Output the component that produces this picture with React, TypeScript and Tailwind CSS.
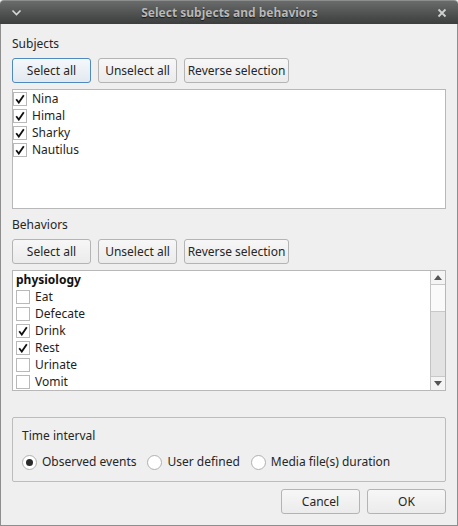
import React from 'react'

const font = { fontFamily: '"Noto Sans", "Open Sans", sans-serif' }

function Btn({ label, focused = false, w = 'w-[80px]' }: { label: string; focused?: boolean; w?: string }) {
  return (
    <button
      type="button"
      className={`${w} h-[25px] whitespace-nowrap rounded-[3px] border text-[12px] text-[#262626] bg-gradient-to-b ${
        focused ? 'border-[#4f89bd] from-[#f5f8fb] to-[#e2e9ef]' : 'border-[#b4b4b4] from-[#f7f7f7] to-[#ebebeb]'
      }`}
    >
      {label}
    </button>
  )
}

function Check({ checked }: { checked: boolean }) {
  return (
    <span className="w-[14px] h-[14px] border border-[#b9b9b9] bg-white flex items-center justify-center shrink-0">
      {checked && (
        <svg width="10" height="10" viewBox="0 0 10 10">
          <path d="M1.2 5.2 L3.8 8.6 L8.8 1.2" fill="none" stroke="#111" strokeWidth="1.8" />
        </svg>
      )}
    </span>
  )
}

function Row({ label, checked }: { label: string; checked: boolean }) {
  return (
    <div className="h-[17px] flex items-center gap-[5px] text-[12px] text-[#1e1e1e]">
      <Check checked={checked} />
      <span>{label}</span>
    </div>
  )
}

function Radio({ label, on }: { label: string; on?: boolean }) {
  return (
    <div className="flex items-center gap-[5px]">
      <span className="w-[15px] h-[15px] rounded-full border border-[#b0b0b0] bg-white flex items-center justify-center">
        {on && <span className="w-[7px] h-[7px] rounded-full bg-[#2b2b2b]" />}
      </span>
      <span>{label}</span>
    </div>
  )
}

function ButtonRow({ focusFirst = false }: { focusFirst?: boolean }) {
  return (
    <div className="flex gap-[7px]">
      <Btn label="Select all" w="w-[79px]" focused={focusFirst} />
      <Btn label="Unselect all" w="w-[79px]" />
      <Btn label="Reverse selection" w="w-[105px]" />
    </div>
  )
}

export default function App() {
  const subjects = ['Nina', 'Himal', 'Sharky', 'Nautilus']
  const behaviors: [string, boolean][] = [
    ['Eat', false],
    ['Defecate', false],
    ['Drink', true],
    ['Rest', true],
    ['Urinate', false],
    ['Vomit', false],
  ]

  return (
    <div style={font} className="w-[458px] h-[526px] bg-[#efefef] flex flex-col text-[12px] text-[#262626]">
      {/* title bar */}
      <div className="h-[24px] shrink-0 rounded-t-[4px] bg-gradient-to-b from-[#6a6c6c] to-[#3c3e3e] border-t border-[#8c8e8e] flex items-center px-[10px]">
        <svg width="11" height="8" viewBox="0 0 11 8" className="ml-[1px]">
          <path d="M1.5 1.5 L5.5 5.5 L9.5 1.5" fill="none" stroke="#d8d8d8" strokeWidth="1.6" />
        </svg>
        <span
          className="flex-1 text-center font-bold text-[12px] text-[#b8b8b8]"
          style={{ textShadow: '0 1px 1px #1a1a1a' }}
        >
          Select subjects and behaviors
        </span>
        <svg width="10" height="10" viewBox="0 0 10 10" className="mr-[1px]">
          <path d="M1.5 1.5 L8.5 8.5 M8.5 1.5 L1.5 8.5" stroke="#cfcfcf" strokeWidth="1.8" />
        </svg>
      </div>

      {/* body */}
      <div className="flex-1 flex flex-col border-x border-b border-[#8e8e8e] px-[11px]">
        <div className="h-[17px] mt-[11px] leading-[17px]">Subjects</div>
        <div className="mt-[6px]">
          <ButtonRow focusFirst />
        </div>
        <div className="mt-[6px] h-[120px] border border-[#b8b8b8] bg-white">
          {subjects.map((s) => (
            <Row key={s} label={s} checked />
          ))}
        </div>

        <div className="h-[17px] mt-[7px] leading-[17px]">Behaviors</div>
        <div className="mt-[6px]">
          <ButtonRow />
        </div>
        <div className="mt-[6px] h-[121px] border border-[#b8b8b8] bg-white flex">
          <div className="flex-1 pl-[3px] overflow-hidden">
            <div className="h-[17px] leading-[17px] font-bold text-[#111]">physiology</div>
            {behaviors.map(([b, c]) => (
              <Row key={b} label={b} checked={c} />
            ))}
          </div>
          <div className="w-[15px] border-l border-[#c4c4c4] flex flex-col bg-[#f4f4f4]">
            <div className="h-[14px] flex items-center justify-center border-b border-[#c8c8c8]">
              <svg width="8" height="5" viewBox="0 0 8 5">
                <path d="M0 5 L4 0 L8 5 Z" fill="#555" />
              </svg>
            </div>
            <div className="h-[27px] bg-[#fafafa] border-b border-[#c8c8c8]" />
            <div className="flex-1 bg-[#e3e3e3]" />
            <div className="h-[14px] flex items-center justify-center border-t border-[#c8c8c8]">
              <svg width="8" height="5" viewBox="0 0 8 5">
                <path d="M0 0 L4 5 L8 0 Z" fill="#555" />
              </svg>
            </div>
          </div>
        </div>

        {/* time interval group */}
        <div className="mt-[26px] h-[65px] border border-[#bcbcbc] rounded-[2px] px-[9px] pt-[9px]">
          <div className="h-[17px] leading-[17px]">Time interval</div>
          <div className="mt-[9px] flex gap-[11px]">
            <Radio label="Observed events" on />
            <Radio label="User defined" />
            <Radio label="Media file(s) duration" />
          </div>
        </div>

        <div className="mt-[7px] flex justify-end gap-[7px]">
          <Btn label="Cancel" w="w-[79px]" />
          <Btn label="OK" w="w-[79px]" />
        </div>
      </div>
    </div>
  )
}
